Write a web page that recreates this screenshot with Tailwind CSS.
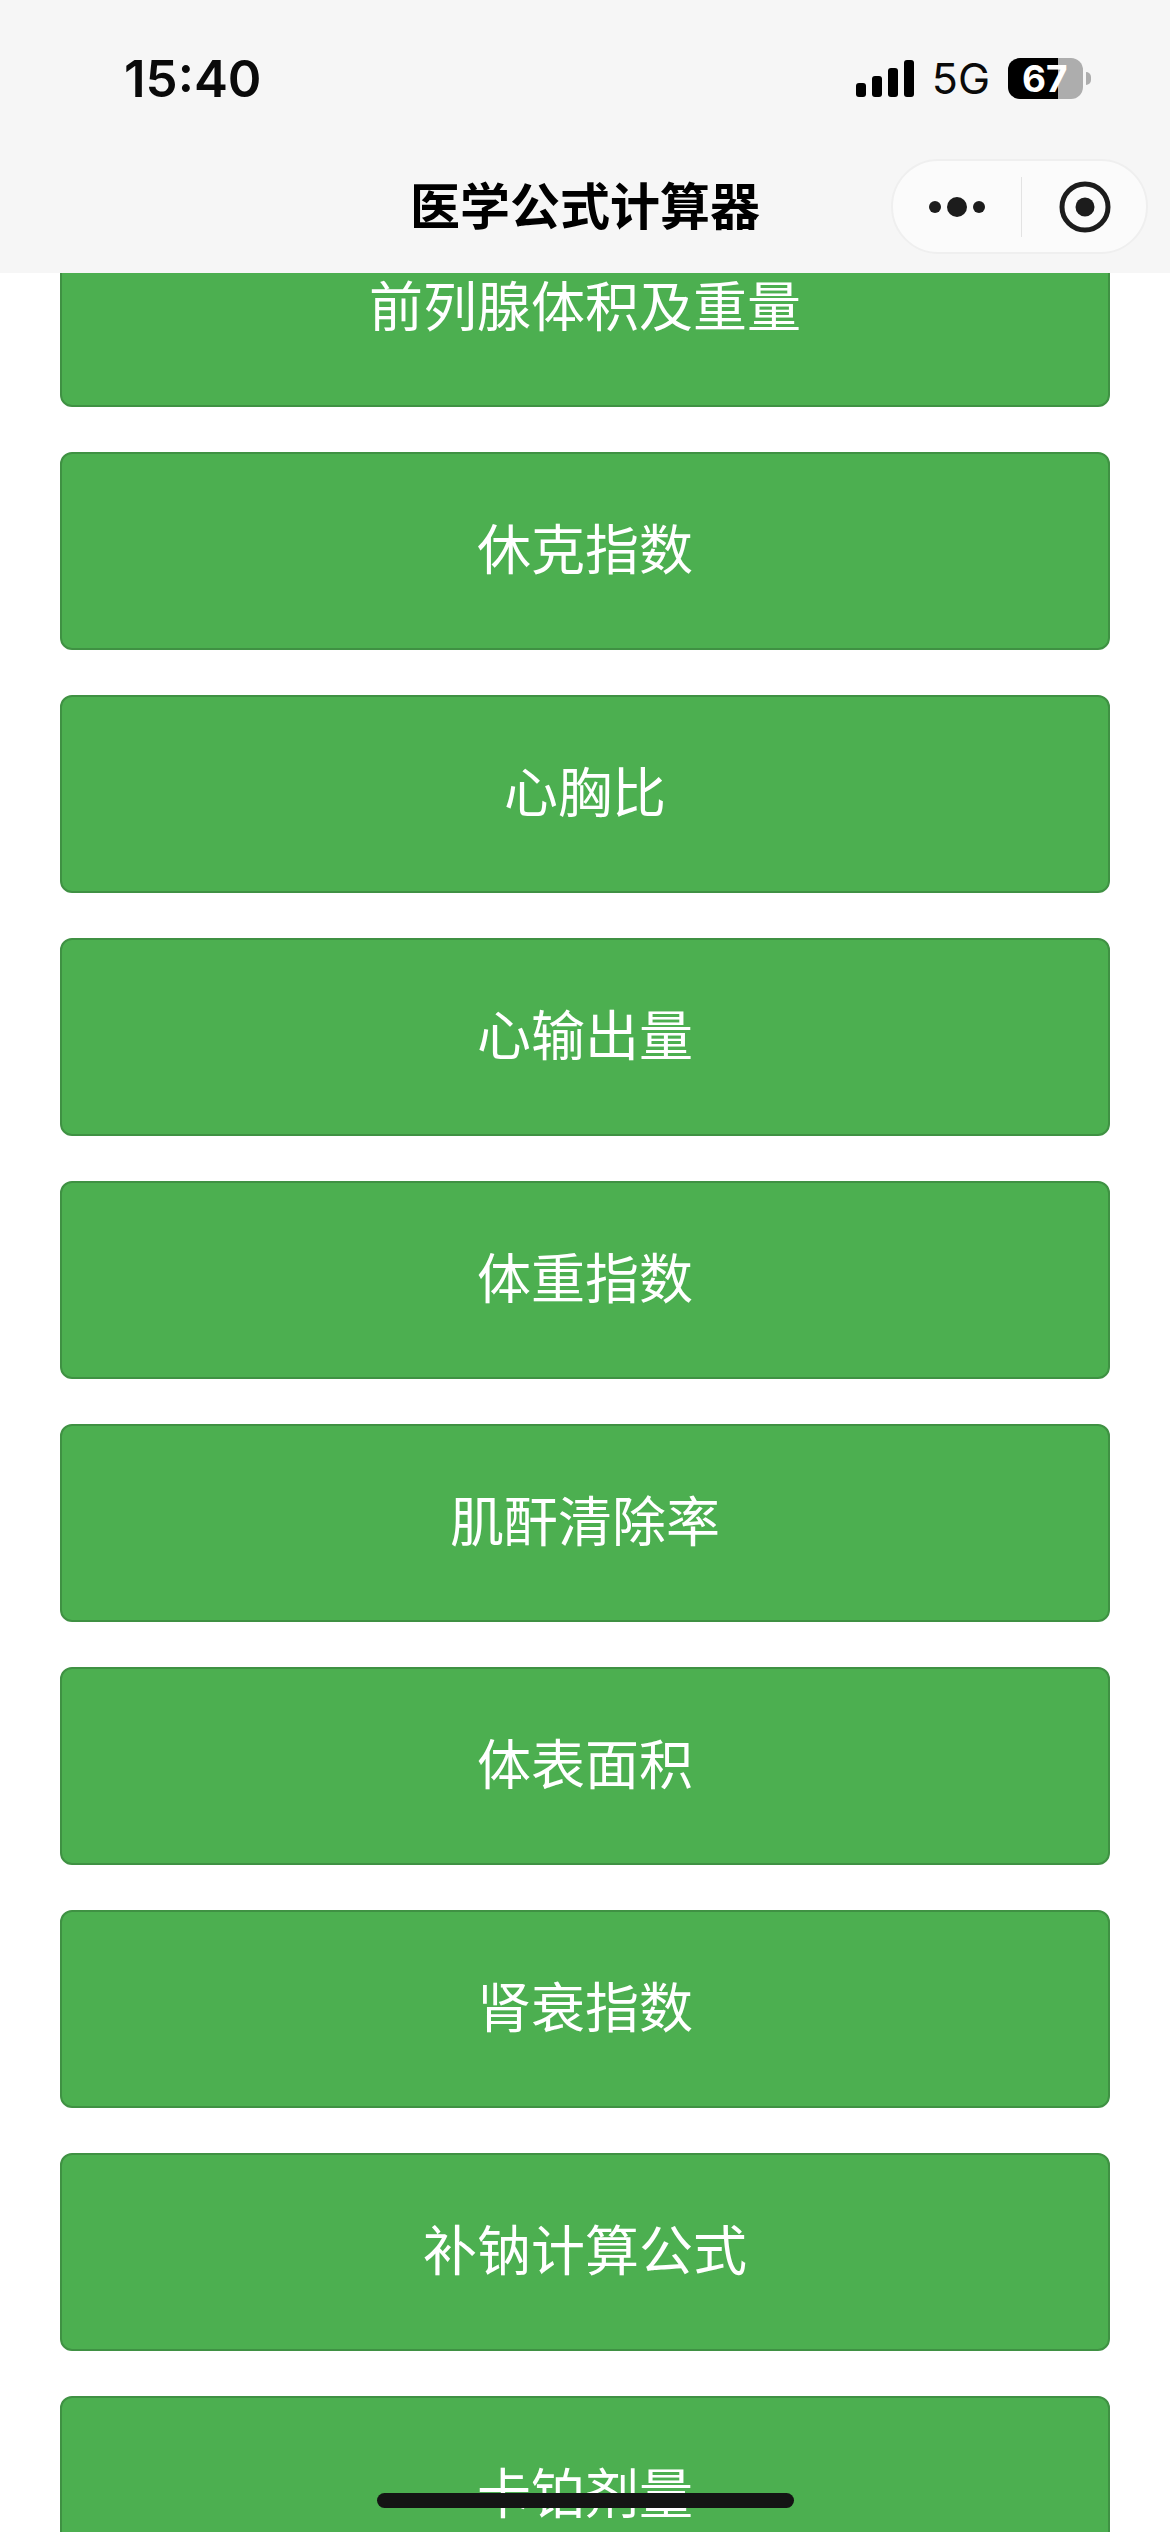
<!DOCTYPE html>
<html lang="zh-CN">
<head>
    <meta charset="UTF-8">
    <meta name="viewport" content="width=device-width, initial-scale=1.0">
    <title>医学公式计算器</title>
    <script src="https://cdn.jsdelivr.net/npm/@tailwindcss/browser@4"></script>
</head>
<body class="bg-white font-['Inter','Noto_Sans_CJK_SC',sans-serif]">
<div class="relative w-[1170px] h-[2532px] overflow-hidden bg-white">

    <!-- Status bar + nav -->
    <header class="relative z-10 h-[273px] bg-[#f6f6f6]">
        <div class="flex items-center justify-between h-[156px] pl-[124px] pr-[79px]">
            <span class="text-[51px] leading-none font-semibold text-[#0a0a0a]">15:40</span>
            <div class="flex items-center">
                <svg width="58" height="37" viewBox="0 0 58 37" fill="#000">
                    <rect x="0" y="23" width="10" height="14" rx="3"/>
                    <rect x="16" y="16" width="10" height="21" rx="3"/>
                    <rect x="32" y="8" width="10" height="29" rx="3"/>
                    <rect x="48" y="0" width="10" height="37" rx="3"/>
                </svg>
                <span class="ml-[18px] text-[43px] leading-none text-[#0a0a0a]">5G</span>
                <div class="relative ml-[18px] flex w-[75px] h-[41px] rounded-[12px] bg-[#adadad]">
                    <div class="w-[50px] h-full rounded-l-[12px] bg-black"></div>
                    <span class="absolute left-[14px] top-0 text-[37px] leading-[41px] font-bold text-white">67</span>
                </div>
                <div class="ml-[3px] w-[5px] h-[13px] rounded-r-full bg-[#adadad]"></div>
            </div>
        </div>
        <div class="relative flex items-center justify-center h-[102px]">
            <h1 class="text-[50px] leading-none font-semibold text-black">医学公式计算器</h1>
            <div class="absolute left-[891px] top-[3px] flex items-center w-[257px] h-[95px] rounded-full border-2 border-[#efefef] bg-[#fbfbfb]">
                <div class="flex items-center justify-center w-[128px] h-full">
                    <svg width="56" height="24" viewBox="0 0 56 24" fill="#1c1c1c">
                        <circle cx="6" cy="12" r="6"/>
                        <circle cx="28" cy="12" r="10"/>
                        <circle cx="50" cy="12" r="6"/>
                    </svg>
                </div>
                <div class="w-[1px] h-[60px] bg-[#e3e3e3]"></div>
                <div class="flex items-center justify-center flex-1 h-full">
                    <svg width="52" height="52" viewBox="0 0 52 52" class="ml-[2px]">
                        <circle cx="26" cy="26" r="23" fill="none" stroke="#1c1c1c" stroke-width="5"/>
                        <circle cx="26" cy="26" r="9.5" fill="#1c1c1c"/>
                    </svg>
                </div>
            </div>
        </div>
    </header>

    <!-- Formula list, scrolled under the nav -->
    <main class="flex flex-col gap-[45px] px-[60px] -mt-[64px]">
        <button class="shrink-0 h-[198px] pb-[2px] rounded-[12px] border-2 border-[#3f9143] bg-[#4caf50] text-[54px] text-white">前列腺体积及重量</button>
        <button class="shrink-0 h-[198px] pb-[2px] rounded-[12px] border-2 border-[#3f9143] bg-[#4caf50] text-[54px] text-white">休克指数</button>
        <button class="shrink-0 h-[198px] pb-[2px] rounded-[12px] border-2 border-[#3f9143] bg-[#4caf50] text-[54px] text-white">心胸比</button>
        <button class="shrink-0 h-[198px] pb-[2px] rounded-[12px] border-2 border-[#3f9143] bg-[#4caf50] text-[54px] text-white">心输出量</button>
        <button class="shrink-0 h-[198px] pb-[2px] rounded-[12px] border-2 border-[#3f9143] bg-[#4caf50] text-[54px] text-white">体重指数</button>
        <button class="shrink-0 h-[198px] pb-[2px] rounded-[12px] border-2 border-[#3f9143] bg-[#4caf50] text-[54px] text-white">肌酐清除率</button>
        <button class="shrink-0 h-[198px] pb-[2px] rounded-[12px] border-2 border-[#3f9143] bg-[#4caf50] text-[54px] text-white">体表面积</button>
        <button class="shrink-0 h-[198px] pb-[2px] rounded-[12px] border-2 border-[#3f9143] bg-[#4caf50] text-[54px] text-white">肾衰指数</button>
        <button class="shrink-0 h-[198px] pb-[2px] rounded-[12px] border-2 border-[#3f9143] bg-[#4caf50] text-[54px] text-white">补钠计算公式</button>
        <button class="shrink-0 h-[198px] pb-[2px] rounded-[12px] border-2 border-[#3f9143] bg-[#4caf50] text-[54px] text-white">卡铂剂量</button>
    </main>

    <!-- Home indicator -->
    <div class="absolute left-[377px] top-[2493px] w-[417px] h-[15px] rounded-full bg-[#141414]"></div>
</div>
</body>
</html>
